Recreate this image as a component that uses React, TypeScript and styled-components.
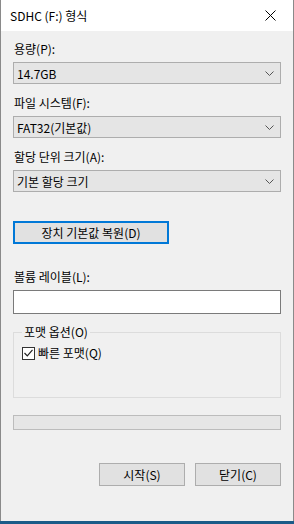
import React from "react";
import styled, { createGlobalStyle } from "styled-components";

const GlobalStyle = createGlobalStyle`
  html, body {
    margin: 0;
    padding: 0;
    background: #1b5b88;
  }
  body {
    font-family: "Noto Sans CJK KR", "Noto Sans", sans-serif;
    font-size: 12px;
    color: #000;
  }
`;

const Window = styled.div`
  width: 294px;
  height: 521px;
  box-sizing: border-box;
  border-left: 1px solid #8a8a8a;
  border-right: 1px solid #8a8a8a;
  background: #f0f0f0;
  display: flex;
  flex-direction: column;
`;

const TitleBar = styled.div`
  height: 31px;
  background: #fff;
  display: flex;
  align-items: center;
  justify-content: space-between;
  padding-left: 9px;
`;

const Title = styled.span`
  font-size: 12px;
  line-height: 16px;
`;

const CloseButton = styled.div`
  width: 46px;
  height: 31px;
  display: flex;
  align-items: center;
  justify-content: center;
`;

const Content = styled.div`
  flex: 1;
  display: flex;
  flex-direction: column;
  padding: 10px 12px 0 12px;
`;

const FieldLabel = styled.div<{ $top?: number }>`
  line-height: 16px;
  margin-top: ${(p) => p.$top ?? 0}px;
  margin-bottom: 5px;
  padding-left: 1px;
`;

const Combo = styled.div`
  height: 22px;
  box-sizing: border-box;
  background: #e5e5e5;
  border: 1px solid #adadad;
  display: flex;
  align-items: center;
  justify-content: space-between;
  padding: 0 6px 0 3px;
`;

const ResetButton = styled.div`
  margin-top: 29px;
  width: 156px;
  height: 23px;
  box-sizing: border-box;
  background: #e1e1e1;
  border: 2px solid #0078d7;
  display: flex;
  align-items: center;
  justify-content: center;
`;

const TextInput = styled.div`
  height: 24px;
  box-sizing: border-box;
  background: #fff;
  border: 1px solid #7a7a7a;
`;

const Group = styled.fieldset`
  margin: 10px 0 0 0;
  height: 74px;
  box-sizing: border-box;
  border: 1px solid #dcdcdc;
  padding: 5px 8px 0 8px;
`;

const Legend = styled.legend`
  padding: 0 2px;
  line-height: 16px;
`;

const CheckRow = styled.div`
  display: flex;
  align-items: center;
  gap: 3px;
  line-height: 16px;
`;

const CheckBox = styled.div`
  width: 13px;
  height: 13px;
  box-sizing: border-box;
  border: 1px solid #333;
  background: #fff;
  display: flex;
  align-items: center;
  justify-content: center;
`;

const Progress = styled.div`
  margin-top: 17px;
  height: 15px;
  box-sizing: border-box;
  background: #e6e6e6;
  border: 1px solid #bcbcbc;
`;

const ButtonRow = styled.div`
  margin-top: 33px;
  display: flex;
  justify-content: flex-end;
  gap: 10px;
`;

const DialogButton = styled.div`
  width: 86px;
  height: 23px;
  box-sizing: border-box;
  background: #e1e1e1;
  border: 1px solid #adadad;
  display: flex;
  align-items: center;
  justify-content: center;
`;

const Chevron = () => (
  <svg width="9" height="5" viewBox="0 0 9 5">
    <path d="M0.5 0.5 L4.5 4.5 L8.5 0.5" fill="none" stroke="#555" strokeWidth="1" />
  </svg>
);

const ComboBox: React.FC<{ value: string }> = ({ value }) => (
  <Combo>
    <span>{value}</span>
    <Chevron />
  </Combo>
);

export default function App() {
  return (
    <>
      <GlobalStyle />
      <Window>
        <TitleBar>
          <Title>SDHC (F:) 형식</Title>
          <CloseButton>
            <svg width="11" height="11" viewBox="0 0 11 11">
              <path d="M0.5 0.5 L10.5 10.5 M10.5 0.5 L0.5 10.5" stroke="#000" strokeWidth="1" />
            </svg>
          </CloseButton>
        </TitleBar>
        <Content>
          <FieldLabel>용량(P):</FieldLabel>
          <ComboBox value="14.7GB" />
          <FieldLabel $top={11}>파일 시스템(F):</FieldLabel>
          <ComboBox value="FAT32(기본값)" />
          <FieldLabel $top={11}>할당 단위 크기(A):</FieldLabel>
          <ComboBox value="기본 할당 크기" />
          <ResetButton>장치 기본값 복원(D)</ResetButton>
          <FieldLabel $top={25}>볼륨 레이블(L):</FieldLabel>
          <TextInput />
          <Group>
            <Legend>포맷 옵션(O)</Legend>
            <CheckRow>
              <CheckBox>
                <svg width="9" height="8" viewBox="0 0 9 8">
                  <path d="M0.5 4 L3.3 6.8 L8.5 0.8" fill="none" stroke="#222" strokeWidth="1.2" />
                </svg>
              </CheckBox>
              <span>빠른 포맷(Q)</span>
            </CheckRow>
          </Group>
          <Progress />
          <ButtonRow>
            <DialogButton>시작(S)</DialogButton>
            <DialogButton>닫기(C)</DialogButton>
          </ButtonRow>
        </Content>
      </Window>
    </>
  );
}
